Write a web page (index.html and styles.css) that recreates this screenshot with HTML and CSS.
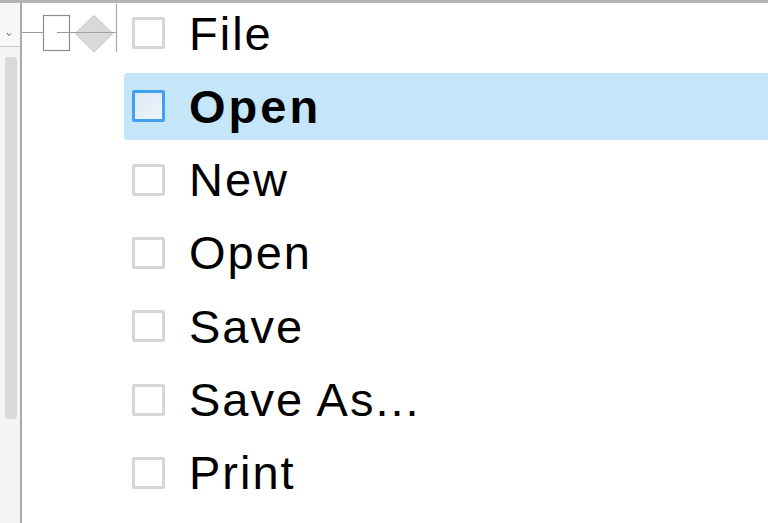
FILE: index.html
```html
<!DOCTYPE html>
<html>
<head>
<meta charset="utf-8">
<link rel="stylesheet" href="styles.css">
</head>
<body>
<div class="topbar"></div>
<div class="frame">
  <aside class="side">
    <div class="side-head">
      <svg class="chev" width="6" height="5" viewBox="0 0 6 5"><path d="M1 1 L3 3.5 L5 1.5" fill="none" stroke="#555" stroke-width="1"/></svg>
    </div>
    <div class="side-body">
      <div class="thumb"></div>
    </div>
  </aside>
  <main class="tree">
    <div class="row">
      <div class="indent">
        <svg width="102" height="67" viewBox="0 0 102 67">
          <line x1="0" y1="32.5" x2="21" y2="32.5" stroke="#9a9a9a" stroke-width="1"/>
          <rect x="21.5" y="15.5" width="26" height="35" fill="#fff" stroke="#8c8c8c" stroke-width="1.2"/>
          <line x1="35" y1="32.5" x2="94" y2="32.5" stroke="#9a9a9a" stroke-width="1"/>
          <polygon points="72,15.5 91,33.5 72,52 53,33.5" fill="#d9d9d9" stroke="#c6c6c6" stroke-width="1"/>
          <line x1="53" y1="32.5" x2="94" y2="32.5" stroke="#a4a4a4" stroke-width="1"/>
          <line x1="94.5" y1="3.5" x2="94.5" y2="52" stroke="#ababab" stroke-width="1.2"/>
        </svg>
      </div>
      <div class="item"><span class="box"></span><span class="label">File</span></div>
    </div>
    <div class="row">
      <div class="indent"></div>
      <div class="item selected"><span class="box"></span><span class="label">Open</span></div>
    </div>
    <div class="row">
      <div class="indent"></div>
      <div class="item"><span class="box"></span><span class="label">New</span></div>
    </div>
    <div class="row">
      <div class="indent"></div>
      <div class="item"><span class="box"></span><span class="label">Open</span></div>
    </div>
    <div class="row">
      <div class="indent"></div>
      <div class="item"><span class="box"></span><span class="label">Save</span></div>
    </div>
    <div class="row">
      <div class="indent"></div>
      <div class="item"><span class="box"></span><span class="label">Save As...</span></div>
    </div>
    <div class="row">
      <div class="indent"></div>
      <div class="item"><span class="box"></span><span class="label">Print</span></div>
    </div>
  </main>
</div>
</body>
</html>
```

FILE: styles.css
```css
* { box-sizing: border-box; }
html, body {
  margin: 0;
  padding: 0;
  width: 768px;
  height: 523px;
  overflow: hidden;
  background: #fff;
  font-family: "Liberation Sans", Arial, sans-serif;
}
.topbar {
  height: 3px;
  background: #b4b4b4;
}
.frame {
  display: flex;
  height: 520px;
}
.side {
  width: 22px;
  flex: none;
  background: #f4f4f4;
  border-right: 2px solid #aaaaaa;
  display: flex;
  flex-direction: column;
}
.side-head {
  height: 44px;
  border-bottom: 1px solid #c9c9c9;
  background: #f7f7f7;
  display: flex;
  align-items: flex-start;
  padding: 29px 0 0 6px;
}
.chev { display: block; }
.side-body {
  flex: 1;
  padding: 10px 3px 0 5px;
}
.thumb {
  width: 12px;
  height: 362px;
  background: #dadada;
  border-radius: 3px;
}
.tree {
  flex: 1;
  display: flex;
  flex-direction: column;
  margin-top: -3.5px;
  min-width: 0;
}
.row {
  display: flex;
  height: 67px;
  margin-bottom: 6.33px;
  flex: none;
}
.indent {
  width: 102px;
  flex: none;
}
.indent svg { display: block; }
.item {
  flex: 1;
  display: flex;
  align-items: center;
  padding-left: 8px;
  border-radius: 3px 0 0 3px;
}
.item.selected {
  background: #c5e6f9;
}
.box {
  width: 33px;
  height: 32px;
  border: 3px solid #d6d6d6;
  border-radius: 2px;
  background: #fff;
  flex: none;
}
.selected .box {
  border-color: #40a2ee;
  background: linear-gradient(135deg, #dde9f5, #eef4fa);
}
.label {
  margin-left: 24px;
  font-size: 47px;
  letter-spacing: 2px;
  color: #000;
  line-height: 1;
  white-space: nowrap;
}
.selected .label {
  font-weight: bold;
  letter-spacing: 3px;
}
```
